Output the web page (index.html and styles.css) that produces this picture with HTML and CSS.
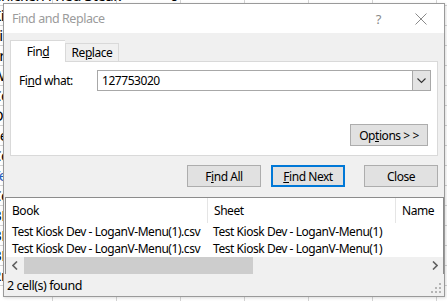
FILE: index.html
```html
<!DOCTYPE html>
<html lang="en">
<head>
    <meta charset="UTF-8">
    <title>Find and Replace</title>
    <link rel="stylesheet" href="styles.css">
</head>
<body>
    <div class="sheet">
        <div class="sheet-row first"><span class="cell wide">Chicken Fried Steak</span><span class="num">0</span></div>
        <div class="sheet-row"><span class="cell">Ki</span></div>
        <div class="sheet-row"><span class="cell">Fi</span></div>
        <div class="sheet-row"><span class="cell">Fr</span></div>
        <div class="sheet-row"><span class="cell">Wy</span></div>
        <div class="sheet-row"><span class="cell">Co</span></div>
        <div class="sheet-row"><span class="cell">Oc</span></div>
        <div class="sheet-row"><span class="cell">Se</span></div>
        <div class="sheet-row"><span class="cell">Co</span></div>
        <div class="sheet-row blue"><span class="cell">Te</span></div>
        <div class="sheet-row"><span class="cell">Co</span></div>
        <div class="sheet-row"><span class="cell">BE</span></div>
        <div class="sheet-row"><span class="cell">BE</span></div>
        <div class="sheet-row"><span class="cell">BE</span></div>
        <div class="sheet-row"><span class="cell">Rr</span></div>
    </div>

    <div class="dialog">
        <div class="titlebar">
            <span class="title">Find and Replace</span>
            <span class="help">?</span>
            <svg class="close-x" width="12" height="12" viewBox="0 0 12 12">
                <path d="M0.5 0.5 L11.5 11.5 M11.5 0.5 L0.5 11.5" stroke="#8a8a8a" stroke-width="1" fill="none"/>
            </svg>
        </div>

        <div class="tabs">
            <div class="tab active">Fin<u>d</u></div>
            <div class="tab">Re<u>p</u>lace</div>
        </div>

        <div class="panel">
            <div class="find-row">
                <label class="find-label">Fi<u>n</u>d what:</label>
                <div class="combo">
                    <span class="combo-text">127753020</span>
                    <span class="combo-btn">
                        <svg width="9" height="6" viewBox="0 0 9 6">
                            <path d="M0.5 0.5 L4.5 4.5 L8.5 0.5" stroke="#333" stroke-width="1.1" fill="none"/>
                        </svg>
                    </span>
                </div>
            </div>
            <div class="options-row">
                <button class="btn options">Op<u>t</u>ions &gt; &gt;</button>
            </div>
        </div>

        <div class="actions">
            <button class="btn">F<u>i</u>nd All</button>
            <button class="btn primary"><u>F</u>ind Next</button>
            <button class="btn close">Close</button>
        </div>

        <div class="results">
            <div class="results-head">
                <div class="col book">Book</div>
                <div class="col sheet-col">Sheet</div>
                <div class="col name">Name</div>
            </div>
            <div class="results-row">
                <div class="col book">Test Kiosk Dev - LoganV-Menu(1).csv</div>
                <div class="col sheet-col">Test Kiosk Dev - LoganV-Menu(1)</div>
                <div class="col name"></div>
            </div>
            <div class="results-row">
                <div class="col book">Test Kiosk Dev - LoganV-Menu(1).csv</div>
                <div class="col sheet-col">Test Kiosk Dev - LoganV-Menu(1)</div>
                <div class="col name"></div>
            </div>
            <div class="hscroll">
                <span class="arrow">
                    <svg width="6" height="9" viewBox="0 0 6 9">
                        <path d="M5 0.5 L1 4.5 L5 8.5" stroke="#606060" stroke-width="1.6" fill="none"/>
                    </svg>
                </span>
                <div class="track"><div class="thumb"></div></div>
                <span class="arrow">
                    <svg width="6" height="9" viewBox="0 0 6 9">
                        <path d="M1 0.5 L5 4.5 L1 8.5" stroke="#606060" stroke-width="1.6" fill="none"/>
                    </svg>
                </span>
            </div>
        </div>

        <div class="status">
            <span>2 cell(s) found</span>
            <svg class="grip" width="10" height="10" viewBox="0 0 10 10">
                <rect x="8" y="0" width="2" height="2" fill="#b5b5b5"/>
                <rect x="4" y="4" width="2" height="2" fill="#b5b5b5"/>
                <rect x="8" y="4" width="2" height="2" fill="#b5b5b5"/>
                <rect x="0" y="8" width="2" height="2" fill="#b5b5b5"/>
                <rect x="4" y="8" width="2" height="2" fill="#b5b5b5"/>
                <rect x="8" y="8" width="2" height="2" fill="#b5b5b5"/>
            </svg>
        </div>
    </div>
</body>
</html>
```

FILE: styles.css
```css
body {
    margin: 0;
    padding: 0;
    width: 447px;
    height: 301px;
    overflow: hidden;
    font-family: "Segoe UI", "Noto Sans", "Open Sans", sans-serif;
    font-size: 12px;
    letter-spacing: -0.45px;
    color: #000;
    background-color: #fff;
    background-image:
        repeating-linear-gradient(90deg, transparent 0, transparent 52px, #d4d4d4 52px, #d4d4d4 53px, transparent 53px, transparent 64px);
    position: relative;
}
.sheet {
    display: flex;
    flex-direction: column;
    margin-left: -8px;
    margin-top: -14px;
}
.sheet-row {
    height: 19px;
    border-bottom: 1px solid #d4d4d4;
    font-size: 15px;
    line-height: 19px;
    white-space: nowrap;
    display: flex;
}
.sheet-row .cell {
    width: 11px;
    overflow: hidden;
}
.sheet-row .cell.wide {
    width: 150px;
}
.sheet-row.blue {
    color: #1f5fbf;
}
.sheet-row .num {
    margin-left: 28px;
}
.dialog {
    position: absolute;
    left: 3px;
    top: 3px;
    width: 440px;
    height: 292px;
    border: 1px solid #9a9a9a;
    background: #f0f0f0;
    display: flex;
    flex-direction: column;
    box-shadow: 1px 1px 3px rgba(0, 0, 0, 0.15);
}
.titlebar {
    height: 29px;
    background: #fff;
    display: flex;
    align-items: center;
    flex-shrink: 0;
}
.title {
    margin-left: 8px;
    font-size: 12.5px;
    color: #9b9b9b;
    flex: 1;
}
.help {
    color: #8a8a8a;
    font-size: 13px;
    margin-right: 34px;
}
.close-x {
    margin-right: 17px;
}
.tabs {
    display: flex;
    align-items: flex-end;
    margin: 7px 0 0 6px;
    height: 21px;
}
.tab {
    height: 18px;
    border: 1px solid #d9d9d9;
    border-bottom: none;
    background: #f0f0f0;
    line-height: 18px;
    box-sizing: border-box;
    width: 54px;
    text-align: center;
}
.tab.active {
    height: 22px;
    width: 55px;
    background: #fff;
    border-right: none;
    line-height: 21px;
    position: relative;
    margin-bottom: -1px;
    z-index: 1;
}
.panel {
    margin: 0 6px;
    height: 95px;
    box-sizing: border-box;
    border: 1px solid #d9d9d9;
    background: #fff;
    display: flex;
    flex-direction: column;
    padding: 8px 6px 0 8px;
}
.find-row {
    display: flex;
    align-items: center;
}
.find-label {
    width: 78px;
}
.combo {
    flex: 1;
    height: 21px;
    box-sizing: border-box;
    border: 1px solid #a8a8a8;
    display: flex;
    align-items: center;
}
.combo-text {
    flex: 1;
    padding-left: 4px;
}
.combo-btn {
    width: 17px;
    height: 19px;
    background: #e3e3e3;
    border-left: 1px solid #a8a8a8;
    display: flex;
    align-items: center;
    justify-content: center;
}
.options-row {
    display: flex;
    justify-content: flex-end;
    margin-top: 33px;
    padding-right: 3px;
}
.btn {
    font-family: inherit;
    font-size: 12px;
    letter-spacing: -0.45px;
    color: #000;
    width: 74px;
    height: 22px;
    padding: 0;
    background: #e1e1e1;
    border: 1px solid #adadad;
    box-sizing: border-box;
}
.btn.options {
    width: 78px;
}
.btn.primary {
    border: 2px solid #0078d7;
}
.actions {
    display: flex;
    justify-content: flex-end;
    gap: 10px;
    margin: 9px 6px 0 0;
}
.actions .close {
    margin-left: 9px;
}
.results {
    margin: 10px 0 0 1px;
    height: 77px;
    box-sizing: border-box;
    border: 1px solid #8c8c8c;
    background: #fff;
    display: flex;
    flex-direction: column;
}
.results-head {
    display: flex;
    height: 25px;
    align-items: center;
}
.results-row {
    display: flex;
    height: 17px;
    align-items: center;
}
.col {
    box-sizing: border-box;
    white-space: nowrap;
    overflow: hidden;
    padding-left: 6px;
}
.col.book {
    width: 201px;
}
.col.sheet-col {
    width: 188px;
}
.col.name {
    flex: 1;
}
.results-head .col {
    height: 25px;
    line-height: 25px;
}
.results-head .sheet-col,
.results-head .name {
    border-left: 1px solid #e5e5e5;
}
.hscroll {
    margin-top: auto;
    height: 17px;
    background: #f0f0f0;
    display: flex;
    align-items: center;
}
.arrow {
    width: 17px;
    display: flex;
    justify-content: center;
}
.track {
    flex: 1;
    height: 17px;
}
.thumb {
    width: 229px;
    height: 17px;
    background: #cdcdcd;
    margin-left: 1px;
}
.status {
    flex: 1;
    display: flex;
    align-items: center;
    padding-left: 3px;
    position: relative;
    font-size: 12.5px;
}
.grip {
    position: absolute;
    right: 3px;
    bottom: 3px;
}
```
